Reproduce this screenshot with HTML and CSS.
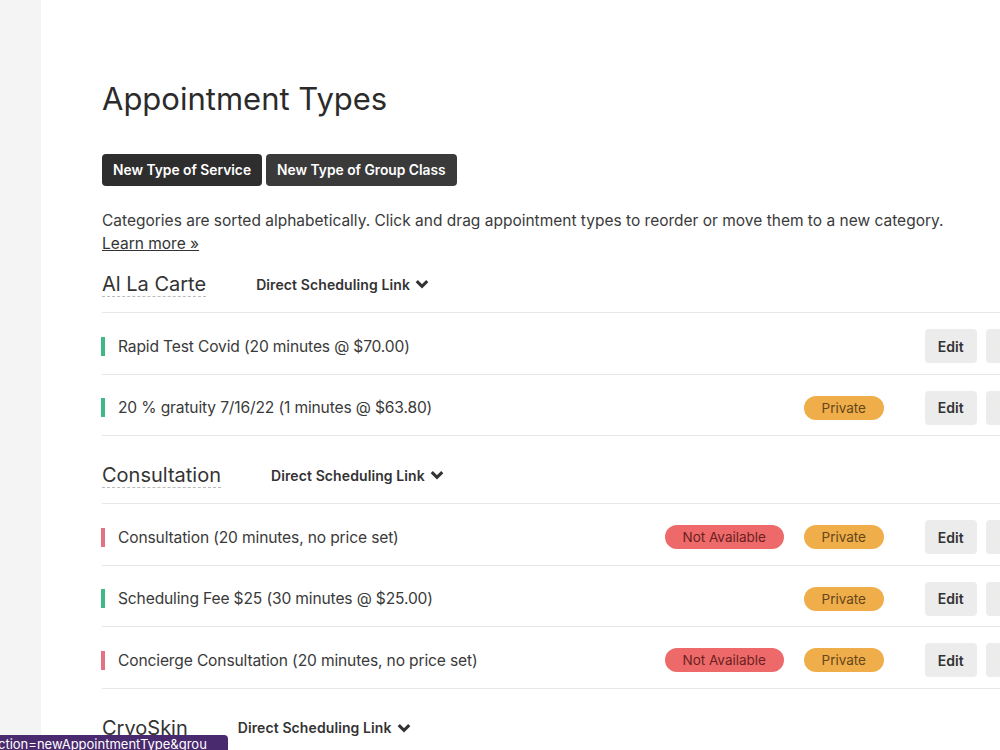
FILE: index.html
```html
<!DOCTYPE html>
<html lang="en">
<head>
    <meta charset="UTF-8">
    <meta name="viewport" content="width=device-width, initial-scale=1.0">
    <title>Appointment Types</title>
    <link rel="stylesheet" href="styles.css">
</head>
<body>
    <div class="side"></div>
    <div class="main">
        <h1 class="title">Appointment Types</h1>
        <div class="btns">
            <button class="btn">New Type of Service</button>
            <button class="btn btn-alt">New Type of Group Class</button>
        </div>
        <p class="note">Categories are sorted alphabetically. Click and drag appointment types to reorder or move them to a new category.<br><a href="#">Learn more &raquo;</a></p>

        <div class="cat">
            <span class="cat-name">Al La Carte</span>
            <span class="link">Direct Scheduling Link <svg class="chev" viewBox="0 0 12 8"><path d="M1.5 1.5 6 6l4.5-4.5" /></svg></span>
        </div>
        <div class="list">
            <div class="row">
                <span class="name"><i class="bar green"></i>Rapid Test Covid (20 minutes @ $70.00)</span>
                <span></span><span></span>
                <span class="acts"><button class="edit">Edit</button><button class="edit more">Delete</button></span>
            </div>
            <div class="row">
                <span class="name"><i class="bar green"></i>20 % gratuity 7/16/22 (1 minutes @ $63.80)</span>
                <span></span><span class="badge priv">Private</span>
                <span class="acts"><button class="edit">Edit</button><button class="edit more">Delete</button></span>
            </div>
        </div>

        <div class="cat">
            <span class="cat-name">Consultation</span>
            <span class="link">Direct Scheduling Link <svg class="chev" viewBox="0 0 12 8"><path d="M1.5 1.5 6 6l4.5-4.5" /></svg></span>
        </div>
        <div class="list">
            <div class="row">
                <span class="name"><i class="bar pink"></i>Consultation (20 minutes, no price set)</span>
                <span class="badge na">Not Available</span><span class="badge priv">Private</span>
                <span class="acts"><button class="edit">Edit</button><button class="edit more">Delete</button></span>
            </div>
            <div class="row">
                <span class="name"><i class="bar green"></i>Scheduling Fee $25 (30 minutes @ $25.00)</span>
                <span></span><span class="badge priv">Private</span>
                <span class="acts"><button class="edit">Edit</button><button class="edit more">Delete</button></span>
            </div>
            <div class="row">
                <span class="name"><i class="bar pink"></i>Concierge Consultation (20 minutes, no price set)</span>
                <span class="badge na">Not Available</span><span class="badge priv">Private</span>
                <span class="acts"><button class="edit">Edit</button><button class="edit more">Delete</button></span>
            </div>
        </div>

        <div class="cat">
            <span class="cat-name plain">CryoSkin</span>
            <span class="link">Direct Scheduling Link <svg class="chev" viewBox="0 0 12 8"><path d="M1.5 1.5 6 6l4.5-4.5" /></svg></span>
        </div>
    </div>
    <div class="status">ction=newAppointmentType&amp;grou</div>
</body>
</html>
```

FILE: styles.css
```css
body {
  margin: 0;
  display: flex;
  height: 750px;
  overflow: hidden;
  font-family: Inter, "Noto Sans", sans-serif;
  color: #333;
  background: #fff;
}
.side {
  width: 41px;
  flex: none;
  background: #f4f4f4;
}
.main {
  flex: none;
  width: 954px;
  padding: 80px 0 0 61px;
}
.title {
  margin: 0;
  font-size: 31px;
  font-weight: 400;
  line-height: 38px;
  color: #2b2b2b;
}
.btns {
  display: flex;
  gap: 4px;
  margin-top: 36px;
}
.btn {
  height: 32px;
  padding: 0 11px;
  border: 0;
  border-radius: 4px;
  background: #2e2e2e;
  color: #fff;
  font-family: inherit;
  font-size: 13.8px;
  font-weight: 600;
}
.btn-alt {
  background: #3a3a3a;
}
.note {
  margin: 23px 0 1px;
  font-size: 15.5px;
  line-height: 23px;
  color: #3a3a3a;
}
.note a {
  color: #333;
}
.cat {
  display: flex;
  align-items: center;
  height: 56px;
}
.list + .cat {
  margin-top: 11px;
}
.cat-name {
  font-size: 20px;
  color: #333;
  border-bottom: 1px dashed #bbb;
  line-height: 24px;
  margin-right: 50px;
}
.cat-name.plain {
  border: 0;
}
.link {
  display: flex;
  align-items: center;
  gap: 5px;
  font-size: 14px;
  font-weight: 600;
  letter-spacing: 0.1px;
  color: #333;
}
.chev {
  width: 14px;
  height: 10px;
  fill: none;
  stroke: #333;
  stroke-width: 2.6;
}
.list {
  border-top: 1px solid #e6e6e6;
}
.row {
  display: grid;
  grid-template-columns: 1fr 119px 80px auto;
  gap: 20px;
  align-items: center;
  height: 54.5px;
  padding-top: 6px;
  border-bottom: 1px solid #e6e6e6;
  font-size: 15.6px;
}
.name {
  display: flex;
  align-items: center;
  color: #3a3a3a;
  letter-spacing: -0.15px;
}
.bar {
  width: 4px;
  height: 19px;
  margin-right: 13px;
  margin-left: -1px;
}
.green {
  background: #3fb886;
}
.pink {
  background: #e27384;
}
.badge {
  height: 24px;
  line-height: 24px;
  border-radius: 12px;
  text-align: center;
  font-size: 13.5px;
}
.priv {
  background: #efae4a;
  color: #65461a;
}
.na {
  background: #ee6a6a;
  color: #6b1f1f;
}
.acts {
  display: flex;
  gap: 9px;
  margin-left: 21px;
}
.edit {
  height: 34px;
  padding: 0 13px;
  border: 0;
  border-radius: 4px;
  background: #ececec;
  color: #333;
  font-family: inherit;
  font-size: 14px;
  font-weight: 600;
}
.edit.more {
  padding-left: 14px;
}
.status {
  position: absolute;
  left: 0;
  bottom: 0;
  width: 228px;
  height: 15px;
  overflow: hidden;
  background: #4a2a6f;
  color: #fff;
  font-size: 13px;
  line-height: 18px;
  white-space: nowrap;
  border-top-right-radius: 4px;
  text-indent: -2px;
}
```
